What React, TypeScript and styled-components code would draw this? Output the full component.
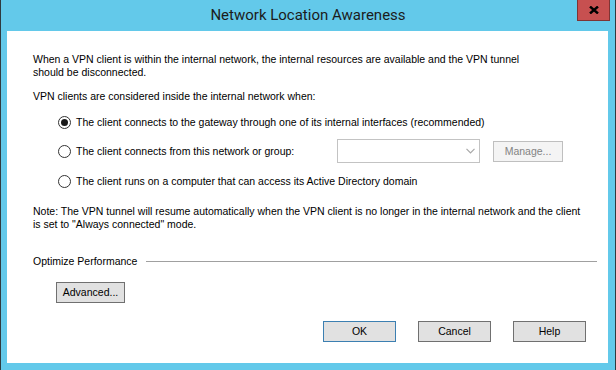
import styled, { createGlobalStyle } from 'styled-components';

const GlobalStyle = createGlobalStyle`
  html, body {
    margin: 0;
    padding: 0;
    background: #ffffff;
  }
  body {
    font-family: "Liberation Sans", Arial, sans-serif;
    font-size: 10.5px;
    color: #000;
  }
`;

const Window = styled.div`
  width: 616px;
  height: 370px;
  box-sizing: border-box;
  background: #63c9ea;
  border-left: 1px solid #2f3a3f;
  border-right: 1px solid #2f3a3f;
  display: flex;
  flex-direction: column;
`;

const TitleBar = styled.div`
  height: 31px;
  display: grid;
  grid-template-columns: 1fr auto 1fr;
  align-items: start;
`;

const Title = styled.div`
  grid-column: 2;
  font-family: Roboto, "Noto Sans", sans-serif;
  font-size: 15px;
  line-height: 30px;
  color: #1c1c1c;
`;

const CloseBtn = styled.div`
  grid-column: 3;
  justify-self: end;
  margin-right: 5px;
  width: 33px;
  height: 21px;
  box-sizing: border-box;
  background: #c75050;
  border: 1px solid #7e3434;
  border-top: none;
  display: flex;
  align-items: center;
  justify-content: center;
`;

const Client = styled.div`
  flex: 1;
  margin: 0 7px 7px 6px;
  background: #ffffff;
  padding: 22px 0 0 26px;
  display: flex;
  flex-direction: column;
`;

const Para = styled.p<{ $top?: number }>`
  margin: ${(p) => p.$top ?? 0}px 0 0 0;
  line-height: 13px;
  white-space: nowrap;
`;

const RadioRow = styled.div<{ $top: number }>`
  margin: ${(p) => p.$top}px 0 0 25px;
  display: flex;
  align-items: center;
  min-height: 13px;
  line-height: 13px;
`;

const Radio = styled.span<{ $checked?: boolean }>`
  width: 13px;
  height: 13px;
  box-sizing: border-box;
  border-radius: 50%;
  border: 1px solid #333;
  background: #fff;
  margin-right: 5px;
  display: flex;
  align-items: center;
  justify-content: center;
  flex-shrink: 0;
  &::after {
    content: '';
    display: ${(p) => (p.$checked ? 'block' : 'none')};
    width: 7px;
    height: 7px;
    border-radius: 50%;
    background: #1a1a1a;
  }
`;

const Label = styled.span<{ $width?: number }>`
  white-space: nowrap;
  width: ${(p) => (p.$width ? `${p.$width}px` : 'auto')};
`;

const Combo = styled.div`
  width: 143px;
  height: 24px;
  box-sizing: border-box;
  border: 1px solid #c3c3c3;
  background: #fff;
  display: flex;
  align-items: center;
  justify-content: flex-end;
  padding-right: 4px;
`;

const Button = styled.div<{ $w: number; $variant?: 'default' | 'normal' | 'disabled' }>`
  width: ${(p) => p.$w}px;
  height: 21px;
  box-sizing: border-box;
  display: flex;
  align-items: center;
  justify-content: center;
  line-height: 13px;
  white-space: nowrap;
  background: ${(p) => (p.$variant === 'disabled' ? '#f4f4f4' : '#e1e1e1')};
  color: ${(p) => (p.$variant === 'disabled' ? '#838383' : '#000')};
  border: 1px solid
    ${(p) => (p.$variant === 'default' ? '#3c7fb1' : p.$variant === 'disabled' ? '#bfbfbf' : '#707070')};
`;

const ManageBtn = styled(Button)`
  margin-left: 13px;
`;

const SectionRow = styled.div`
  margin: 24px 11px 0 0;
  display: flex;
  align-items: center;
  line-height: 13px;
`;

const Rule = styled.div`
  flex: 1;
  height: 1px;
  background: #a0a0a0;
  margin-left: 9px;
`;

const AdvancedWrap = styled.div`
  margin: 14px 0 0 23px;
  display: flex;
`;

const Footer = styled.div`
  margin: 18px 22px 0 0;
  display: flex;
  justify-content: flex-end;
  gap: 22px;
`;

export default function App() {
  return (
    <>
      <GlobalStyle />
      <Window>
        <TitleBar>
          <Title>Network Location Awareness</Title>
          <CloseBtn>
            <svg width="10" height="8" viewBox="0 0 10 8">
              <path d="M1 0.5 L9 7.5 M9 0.5 L1 7.5" stroke="#000" strokeWidth="2.4" />
            </svg>
          </CloseBtn>
        </TitleBar>
        <Client>
          <Para>
            When a VPN client is within the internal network, the internal resources are available and the VPN tunnel
            <br />
            should be disconnected.
          </Para>
          <Para $top={11}>VPN clients are considered inside the internal network when:</Para>
          <RadioRow $top={13}>
            <Radio $checked />
            <Label>The client connects to the gateway through one of its internal interfaces (recommended)</Label>
          </RadioRow>
          <RadioRow $top={10}>
            <Radio />
            <Label $width={261}>The client connects from this network or group:</Label>
            <Combo>
              <svg width="9" height="6" viewBox="0 0 9 6">
                <path d="M0.5 0.8 L4.5 4.8 L8.5 0.8" stroke="#a8a8a8" strokeWidth="1.2" fill="none" />
              </svg>
            </Combo>
            <ManageBtn $w={70} $variant="disabled">
              Manage...
            </ManageBtn>
          </RadioRow>
          <RadioRow $top={12}>
            <Radio />
            <Label>The client runs on a computer that can access its Active Directory domain</Label>
          </RadioRow>
          <Para $top={17}>
            Note: The VPN tunnel will resume automatically when the VPN client is no longer in the internal network and the client
            <br />
            is set to &quot;Always connected&quot; mode.
          </Para>
          <SectionRow>
            <span>Optimize Performance</span>
            <Rule />
          </SectionRow>
          <AdvancedWrap>
            <Button $w={69}>Advanced...</Button>
          </AdvancedWrap>
          <Footer>
            <Button $w={73} $variant="default">
              OK
            </Button>
            <Button $w={73}>Cancel</Button>
            <Button $w={73}>Help</Button>
          </Footer>
        </Client>
      </Window>
    </>
  );
}
